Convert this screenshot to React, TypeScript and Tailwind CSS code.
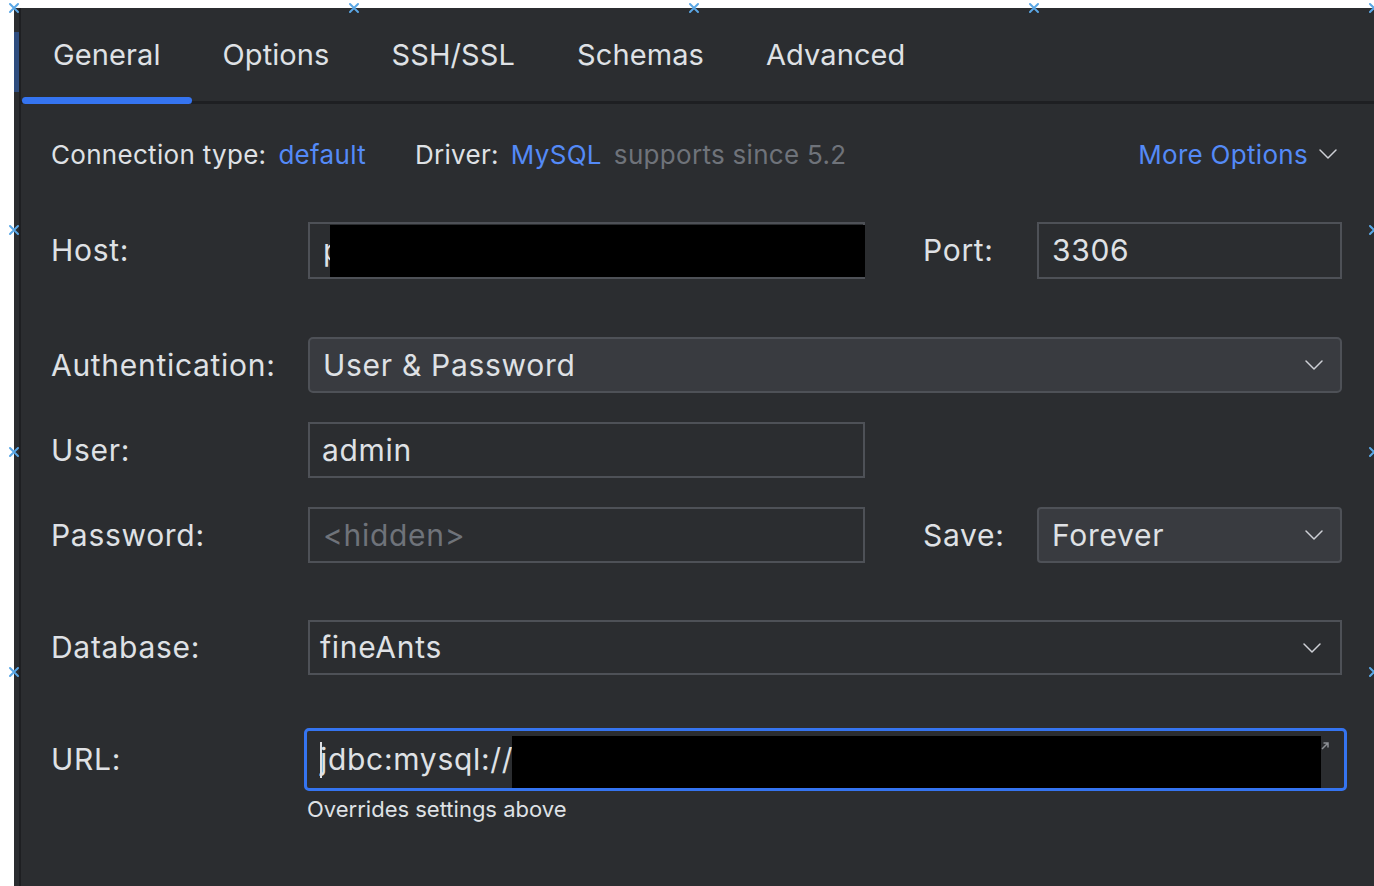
import React from "react";

const font = { fontFamily: "Inter, 'Noto Sans', sans-serif" };

const markers: [number, number][] = [
  [14, 8],
  [354, 8],
  [694, 8],
  [1034, 8],
  [1374, 8],
  [14, 230],
  [1374, 230],
  [14, 452],
  [1374, 452],
  [14, 672],
  [1374, 672],
];

function Chevron() {
  return (
    <svg width="20" height="12" viewBox="0 0 20 12" fill="none">
      <path d="M2 2l8 8 8-8" stroke="#ced0d6" strokeWidth="1.5" strokeLinecap="round" strokeLinejoin="round" />
    </svg>
  );
}

function Marker({ x, y }: { x: number; y: number }) {
  return (
    <svg
      className="absolute pointer-events-none"
      style={{ left: x - 6, top: y - 6 }}
      width="12"
      height="12"
      viewBox="0 0 12 12"
    >
      <path d="M2 2l8 8M10 2l-8 8" stroke="#5aa7e6" strokeWidth="2" strokeLinecap="round" />
    </svg>
  );
}

const tabs = ["General", "Options", "SSH/SSL", "Schemas", "Advanced"];

export default function App() {
  return (
    <div className="relative w-[1374px] h-[886px] bg-white overflow-hidden" style={font}>
      <div className="ml-[14px] mt-[8px] h-[878px] bg-[#2b2d30] flex">
        {/* left gutter */}
        <div className="w-[5px] flex flex-col">
          <div className="mt-[24px] h-[60px] bg-[#2e4c7e]" />
        </div>
        <div className="flex-1 border-l-2 border-[#1e1f22] flex flex-col">
          {/* tabs */}
          <div className="h-[96px] border-b-[3px] border-[#1e1f22] flex pl-[1px]">
            {tabs.map((t, i) => (
              <div
                key={t}
                className="relative h-full flex items-center px-[31px] text-[29px] tracking-[0.1px] text-[#dfe1e5]"
              >
                {t}
                {i === 0 && (
                  <div className="absolute left-0 right-0 bottom-[-3px] h-[7px] rounded-full bg-[#3574f0]" />
                )}
              </div>
            ))}
          </div>

          <div className="pl-[30px] pr-[32px] flex flex-col">
            {/* connection row */}
            <div className="mt-[30px] h-[40px] flex items-center text-[26px] tracking-[0.3px]">
              <span className="text-[#dfe1e5]">Connection type:</span>
              <span className="ml-[12px] text-[#548af7]">default</span>
              <span className="ml-[49px] text-[#dfe1e5]">Driver:</span>
              <span className="ml-[12px] text-[#548af7]">MySQL</span>
              <span className="ml-[12px] text-[#6f737a]">supports since 5.2</span>
              <span className="ml-auto text-[#548af7]">More Options</span>
              <span className="ml-[10px] mr-[4px] flex items-center">
                <Chevron />
              </span>
            </div>

            <div className="flex flex-col text-[30px] tracking-[0.7px] text-[#dfe1e5]">
              {/* host row */}
              <div className="mt-[48px] flex items-center">
                <div className="w-[257px]">Host:</div>
                <div className="relative w-[557px] h-[57px] border-2 border-[#4e5157] flex items-center pl-[13px]">
                  p
                  <div className="absolute left-[20px] top-[1px] right-[-2px] bottom-0 bg-black" />
                </div>
                <div className="ml-[58px] w-[114px]">Port:</div>
                <div className="flex-1 h-[57px] border-2 border-[#4e5157] flex items-center pl-[13px]">3306</div>
              </div>

              {/* authentication */}
              <div className="mt-[58px] flex items-center">
                <div className="w-[257px]">Authentication:</div>
                <div className="flex-1 h-[56px] rounded-[5px] border-2 border-[#4e5157] bg-[#393b40] flex items-center pl-[13px] pr-[16px]">
                  <span className="flex-1">User &amp; Password</span>
                  <Chevron />
                </div>
              </div>

              {/* user */}
              <div className="mt-[29px] flex items-center">
                <div className="w-[257px]">User:</div>
                <div className="w-[557px] h-[56px] border-2 border-[#4e5157] flex items-center pl-[12px]">admin</div>
              </div>

              {/* password */}
              <div className="mt-[29px] flex items-center">
                <div className="w-[257px]">Password:</div>
                <div className="w-[557px] h-[56px] border-2 border-[#4e5157] flex items-center pl-[13px] text-[#6f737a]">
                  &lt;hidden&gt;
                </div>
                <div className="ml-[58px] w-[114px]">Save:</div>
                <div className="flex-1 h-[56px] rounded-[4px] border-2 border-[#4e5157] bg-[#393b40] flex items-center pl-[13px] pr-[16px]">
                  <span className="flex-1">Forever</span>
                  <Chevron />
                </div>
              </div>

              {/* database */}
              <div className="mt-[57px] flex items-center">
                <div className="w-[257px]">Database:</div>
                <div className="flex-1 h-[55px] border-2 border-[#4e5157] flex items-center pl-[10px] pr-[18px]">
                  <span className="flex-1">fineAnts</span>
                  <Chevron />
                </div>
              </div>

              {/* url */}
              <div className="mt-[53px] flex items-center">
                <div className="w-[253px]">URL:</div>
                <div className="relative flex-1 mr-[-5px] h-[63px] rounded-[5px] border-[3px] border-[#3574f0] flex items-center pl-[13px]">
                  <span className="w-[2px] h-[36px] bg-[#dfe1e5] mr-[-2px]" />
                  <span>jdbc:mysql://</span>
                  <div className="absolute left-[205px] right-[23px] top-[5px] bottom-0 bg-black" />
                  <svg className="absolute right-[14px] top-[10px]" width="10" height="10" viewBox="0 0 10 10" fill="none">
                    <path d="M2 8l6-6M3.5 2H8v4.5" stroke="#8c8f94" strokeWidth="1.5" />
                  </svg>
                </div>
              </div>
            </div>

            <div className="ml-[256px] mt-[4px] text-[22px] leading-[28px] text-[#dfe1e5]">
              Overrides settings above
            </div>
          </div>
        </div>
      </div>

      {markers.map(([x, y], i) => (
        <Marker key={i} x={x} y={y} />
      ))}
    </div>
  );
}
